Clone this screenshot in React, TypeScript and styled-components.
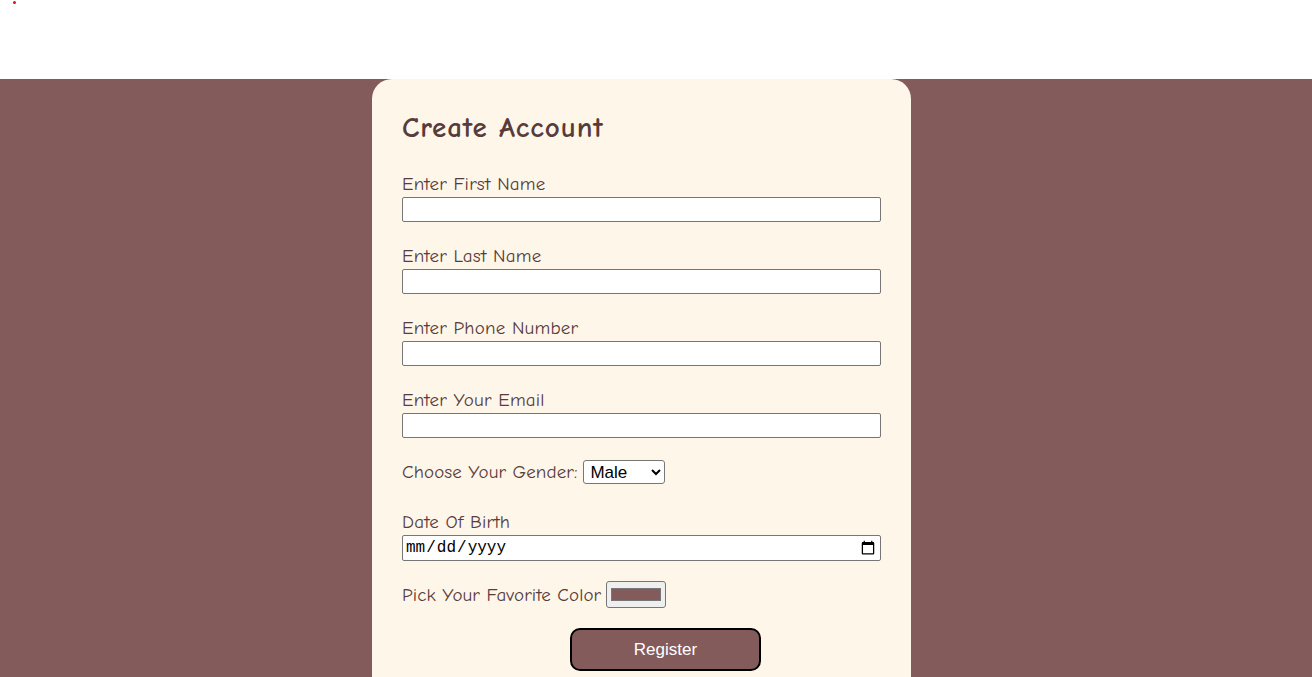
import React from "react";
import styled, { createGlobalStyle } from "styled-components";

const GlobalStyle = createGlobalStyle`
  html, body { margin: 0; padding: 0; background: #ffffff; }
  body { font-family: "Comic Sans MS", "Comic Neue", "Noto Sans", sans-serif; }
  * { box-sizing: border-box; }
`;

const Header = styled.header`
  height: 79px;
  background: #ffffff;
  display: flex;
  align-items: flex-start;
`;

const Dot = styled.span`
  width: 3px;
  height: 3px;
  border-radius: 50%;
  background: #e01010;
  margin: 1px 0 0 13px;
`;

const Main = styled.main`
  background: #845b5b;
  min-height: 598px;
  display: flex;
  padding-left: 372px;
`;

const Card = styled.form`
  width: 539px;
  background: #fff6ea;
  border-radius: 20px 20px 0 0;
  padding: 30px 30px 40px;
  color: #573c3c;
  display: flex;
  flex-direction: column;
`;

const Title = styled.h1`
  margin: 0 0 28px;
  font-size: 29px;
  line-height: 38px;
  font-weight: 700;
  letter-spacing: 0.9px;
`;

const Field = styled.div<{ $gap: number }>`
  display: flex;
  flex-direction: column;
  margin-bottom: ${(p) => p.$gap}px;
`;

const Label = styled.label`
  font-size: 19px;
  line-height: 18px;
  padding-bottom: 4px;
  letter-spacing: 0.2px;
  display: block;
`;

const TextInput = styled.input`
  width: 100%;
  height: ${(p) => (p.type === "date" ? 26 : 25)}px;
  border: 1px solid #767676;
  border-radius: 2px;
  background: #ffffff;
  padding: 1px 2px;
  font-family: "Liberation Mono", "DejaVu Sans Mono", monospace;
  font-size: 16px;
  color: #000;
`;

const Row = styled.div<{ $h: number; $gap: number }>`
  display: flex;
  align-items: center;
  height: ${(p) => p.$h}px;
  margin-bottom: ${(p) => p.$gap}px;
`;

const InlineLabel = styled.label`
  font-size: 19px;
  line-height: 22px;
  letter-spacing: 0.1px;
  margin-right: 6px;
`;

const Select = styled.select`
  width: 82px;
  height: 24px;
  font-family: "Liberation Sans", Arial, sans-serif;
  font-size: 17px;
  color: #000;
  background: #fff;
  border: 1px solid #767676;
  border-radius: 3px;
  padding: 0 2px;
`;

const ColorInput = styled.input`
  width: 60px;
  height: 27px;
  padding: 2px;
  border: 1px solid #767676;
  border-radius: 3px;
  background: #efefef;
  margin-left: -1px;
`;

const Button = styled.button`
  margin-left: 35%;
  width: 40%;
  height: 43px;
  background: #845b5b;
  color: #ffffff;
  border: 2px solid #000000;
  border-radius: 10px;
  font-family: "Liberation Sans", Arial, sans-serif;
  font-size: 17px;
  cursor: pointer;
`;

const fields = [
  "Enter First Name",
  "Enter Last Name",
  "Enter Phone Number",
  "Enter Your Email",
];

export default function App() {
  return (
    <>
      <GlobalStyle />
      <Header>
        <Dot />
      </Header>
      <Main>
        <Card onSubmit={(e) => e.preventDefault()}>
          <Title>Create Account</Title>
          {fields.map((f, i) => (
            <Field key={f} $gap={i === fields.length - 1 ? 22 : 25}>
              <Label>{f}</Label>
              <TextInput type="text" />
            </Field>
          ))}
          <Row $h={24} $gap={29}>
            <InlineLabel>Choose Your Gender:</InlineLabel>
            <Select defaultValue="Male">
              <option>Male</option>
              <option>Female</option>
            </Select>
          </Row>
          <Field $gap={20}>
            <Label>Date Of Birth</Label>
            <TextInput type="date" />
          </Field>
          <Row $h={27} $gap={20}>
            <InlineLabel>Pick Your Favorite Color</InlineLabel>
            <ColorInput type="color" defaultValue="#845b5b" />
          </Row>
          <Button type="submit">Register</Button>
        </Card>
      </Main>
    </>
  );
}
